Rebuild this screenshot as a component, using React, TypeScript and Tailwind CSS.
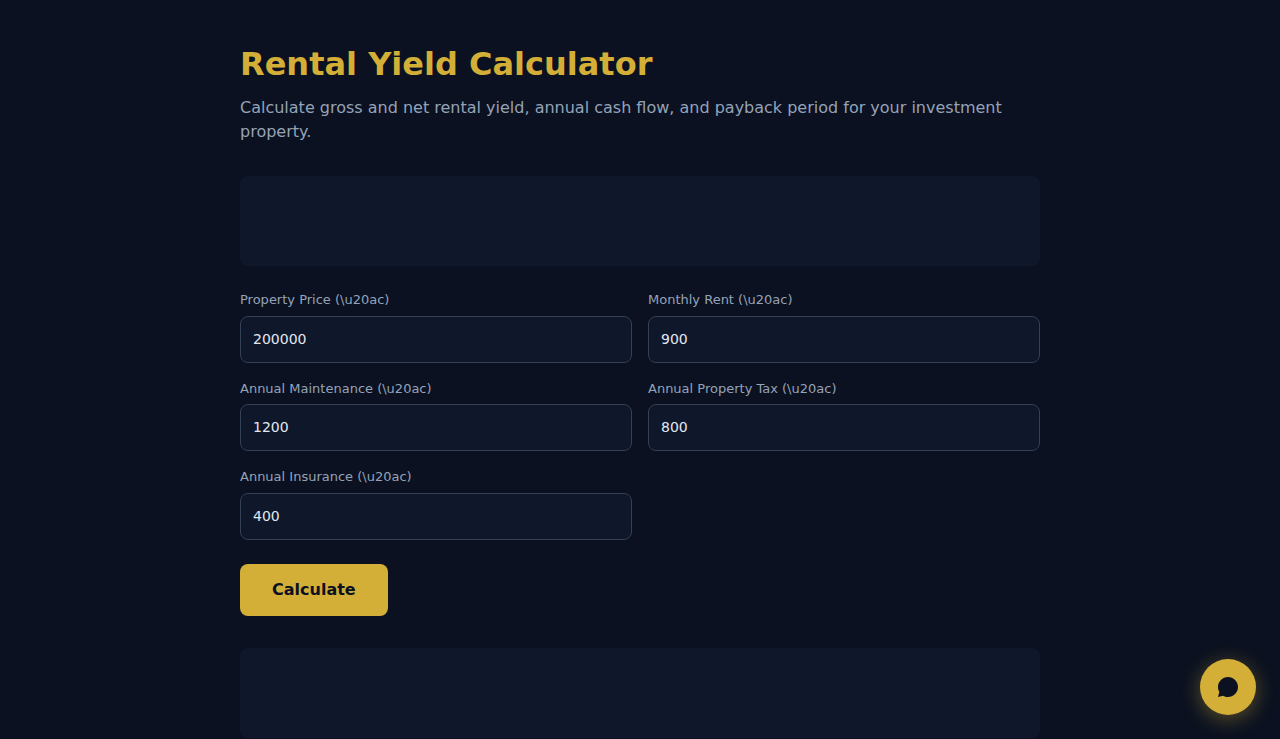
import { useState, type FormEvent } from "react";

type FieldKey = "price" | "rent" | "maintenance" | "tax" | "insurance";

const FIELDS: { key: FieldKey; label: string }[] = [
  { key: "price", label: "Property Price (\\u20ac)" },
  { key: "rent", label: "Monthly Rent (\\u20ac)" },
  { key: "maintenance", label: "Annual Maintenance (\\u20ac)" },
  { key: "tax", label: "Annual Property Tax (\\u20ac)" },
  { key: "insurance", label: "Annual Insurance (\\u20ac)" },
];

const DEFAULTS: Record<FieldKey, string> = {
  price: "200000",
  rent: "900",
  maintenance: "1200",
  tax: "800",
  insurance: "400",
};

type Result = { gross: number; net: number; cashFlow: number; payback: number };

function calculate(values: Record<FieldKey, string>): Result | null {
  const price = Number(values.price);
  if (!(price > 0)) return null;

  const annualRent = Number(values.rent) * 12;
  const cashFlow =
    annualRent - Number(values.maintenance) - Number(values.tax) - Number(values.insurance);

  return {
    gross: (annualRent / price) * 100,
    net: (cashFlow / price) * 100,
    cashFlow,
    payback: cashFlow > 0 ? price / cashFlow : Infinity,
  };
}

// Reserved space for a banner, keeps the layout stable while it is empty.
function AdSlot() {
  return <div aria-hidden className="min-h-[90px] rounded-lg bg-[#0f172a]" />;
}

function ResultRow({ label, value }: { label: string; value: string }) {
  return (
    <div className="flex justify-between gap-4 py-1">
      <dt className="text-[#94a3b8]">{label}</dt>
      <dd className="font-bold text-[#d4af37]">{value}</dd>
    </div>
  );
}

function ChatButton() {
  return (
    <button
      type="button"
      aria-label="Open chat"
      className="fixed right-6 bottom-6 flex size-14 cursor-pointer items-center justify-center rounded-full bg-[#d4af37] text-[#0b1120] shadow-[0_4px_20px_rgba(212,175,55,0.4)]"
    >
      <svg viewBox="0 0 24 24" fill="currentColor" className="size-6" aria-hidden>
        <path d="M12 2C6.48 2 2 6.48 2 12c0 1.82.49 3.53 1.34 5L2 22l5-1.34c1.47.85 3.18 1.34 5 1.34 5.52 0 10-4.48 10-10S17.52 2 12 2z" />
      </svg>
    </button>
  );
}

export default function App() {
  const [values, setValues] = useState(DEFAULTS);
  const [result, setResult] = useState<Result | null>(null);

  function handleSubmit(event: FormEvent) {
    event.preventDefault();
    setResult(calculate(values));
  }

  return (
    <div className="min-h-screen bg-[#0b1120] font-['DejaVu_Sans',sans-serif] text-[#e2e8f0]">
      <main className="mx-auto max-w-[848px] px-6 py-10">
        <h1 className="mb-2 text-[32px] leading-12 font-bold text-[#d4af37]">
          Rental Yield Calculator
        </h1>
        <p className="mb-8 text-base text-[#94a3b8]">
          Calculate gross and net rental yield, annual cash flow, and payback period for your
          investment property.
        </p>

        <AdSlot />

        <form onSubmit={handleSubmit} className="mt-6 mb-8">
          <div className="grid gap-4 sm:grid-cols-2">
            {FIELDS.map(({ key, label }) => (
              <div key={key}>
                <label
                  htmlFor={key}
                  className="mb-1.5 block text-[13px] leading-normal text-[#94a3b8]"
                >
                  {label}
                </label>
                <input
                  id={key}
                  type="number"
                  value={values[key]}
                  onChange={(e) => setValues({ ...values, [key]: e.target.value })}
                  className="block w-full rounded-lg border border-[#334155] bg-[#0f172a] p-3 text-sm leading-normal text-[#e2e8f0] outline-none focus:border-[#d4af37]"
                />
              </div>
            ))}
          </div>
          <button
            type="submit"
            className="mt-6 cursor-pointer rounded-lg bg-[#d4af37] px-8 py-3.5 text-base font-bold text-[#0b1120]"
          >
            Calculate
          </button>
        </form>

        {result && (
          <dl className="mb-8 rounded-lg border border-[#334155] bg-[#0f172a] p-6">
            <ResultRow label="Gross Yield" value={`${result.gross.toFixed(2)}%`} />
            <ResultRow label="Net Yield" value={`${result.net.toFixed(2)}%`} />
            <ResultRow label="Annual Cash Flow" value={`€${result.cashFlow.toLocaleString()}`} />
            <ResultRow
              label="Payback Period"
              value={Number.isFinite(result.payback) ? `${result.payback.toFixed(1)} years` : "–"}
            />
          </dl>
        )}

        <AdSlot />
      </main>
      <ChatButton />
    </div>
  );
}
